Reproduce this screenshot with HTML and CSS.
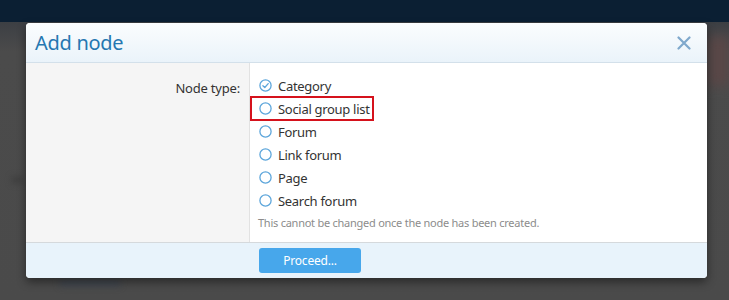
FILE: index.html
```html
<!DOCTYPE html>
<html>
<head>
<meta charset="utf-8">
<link rel="stylesheet" href="styles.css">
</head>
<body>
<div class="topbar"></div>
<div class="backdrop">
  <div class="bg-red"></div>
  <div class="bg-text bg-text-1"></div>
  <div class="bg-text bg-text-2"></div>
  <div class="dialog">
    <div class="dialog-head">
      <h1 class="dialog-title">Add node</h1>
      <span class="close">
        <svg width="14" height="14" viewBox="0 0 14 14"><path d="M1.5 1.5 L12.5 12.5 M12.5 1.5 L1.5 12.5" stroke="#7fa8cc" stroke-width="2.2" stroke-linecap="round" fill="none"/></svg>
      </span>
    </div>
    <div class="dialog-body">
      <div class="label-col">
        <span class="field-label">Node type:</span>
      </div>
      <div class="input-col">
        <ul class="radio-list">
          <li class="radio-row">
            <svg class="radio" width="13" height="13" viewBox="0 0 13 13"><circle cx="6.5" cy="6.5" r="5.6" fill="#fff" stroke="#5da6db" stroke-width="1.3"/><path d="M3.9 6.7 L5.8 8.5 L9.2 4.6" stroke="#5da6db" stroke-width="1.3" fill="none" stroke-linecap="round" stroke-linejoin="round"/></svg>
            <span>Category</span>
          </li>
          <li class="radio-row highlighted">
            <svg class="radio" width="13" height="13" viewBox="0 0 13 13"><circle cx="6.5" cy="6.5" r="5.6" fill="#fff" stroke="#5da6db" stroke-width="1.3"/></svg>
            <span>Social group list</span>
          </li>
          <li class="radio-row">
            <svg class="radio" width="13" height="13" viewBox="0 0 13 13"><circle cx="6.5" cy="6.5" r="5.6" fill="#fff" stroke="#5da6db" stroke-width="1.3"/></svg>
            <span>Forum</span>
          </li>
          <li class="radio-row">
            <svg class="radio" width="13" height="13" viewBox="0 0 13 13"><circle cx="6.5" cy="6.5" r="5.6" fill="#fff" stroke="#5da6db" stroke-width="1.3"/></svg>
            <span>Link forum</span>
          </li>
          <li class="radio-row">
            <svg class="radio" width="13" height="13" viewBox="0 0 13 13"><circle cx="6.5" cy="6.5" r="5.6" fill="#fff" stroke="#5da6db" stroke-width="1.3"/></svg>
            <span>Page</span>
          </li>
          <li class="radio-row">
            <svg class="radio" width="13" height="13" viewBox="0 0 13 13"><circle cx="6.5" cy="6.5" r="5.6" fill="#fff" stroke="#5da6db" stroke-width="1.3"/></svg>
            <span>Search forum</span>
          </li>
        </ul>
        <p class="hint">This cannot be changed once the node has been created.</p>
      </div>
    </div>
    <div class="dialog-foot">
      <div class="foot-spacer"></div>
      <div class="foot-actions">
        <button class="btn-primary">Proceed...</button>
      </div>
    </div>
  </div>
</div>
</body>
</html>
```

FILE: styles.css
```css
html, body {
  margin: 0;
  padding: 0;
}
body {
  width: 729px;
  height: 300px;
  overflow: hidden;
  background: #4a4a4a;
  font-family: "Noto Sans", "Open Sans", sans-serif;
  color: #333;
}
.topbar {
  height: 22px;
  background: #0b1f33;
}
.backdrop {
  position: relative;
  height: 278px;
  padding-top: 1px;
  box-sizing: border-box;
  background: linear-gradient(180deg, #3c3f44 0px, #4b4b4b 30px, #4a4a4a 100%);
}
.bg-red {
  position: absolute;
  right: 0;
  top: 14px;
  width: 22px;
  height: 50px;
  background: #594747;
  filter: blur(6px);
}
.bg-text {
  position: absolute;
  background: #3f4650;
  filter: blur(3px);
  height: 6px;
}
.bg-text-1 { left: 60px; top: 258px; width: 60px; }
.bg-text-2 { left: 12px; top: 155px; width: 10px; background: #3c3c3c; }
.dialog {
  position: relative;
  margin-left: 26px;
  width: 681px;
  border-radius: 4px;
  overflow: hidden;
  background: #fff;
  box-shadow: 0 4px 10px rgba(0,0,0,0.45);
}
.dialog-head {
  height: 40px;
  box-sizing: border-box;
  display: flex;
  align-items: center;
  justify-content: space-between;
  padding: 0 16px 0 9px;
  background: linear-gradient(180deg, #fbfdfe 0%, #eaf3fa 100%);
  border-bottom: 1px solid #d3e0ea;
}
.dialog-title {
  margin: 0;
  font-family: "Noto Sans", "Open Sans", sans-serif;
  font-weight: 400;
  font-size: 20px;
  letter-spacing: -0.3px;
  color: #2577b1;
  line-height: 1;
}
.close {
  display: flex;
  width: 14px;
  height: 14px;
}
.dialog-body {
  display: flex;
  height: 179px;
}
.label-col {
  width: 224px;
  box-sizing: border-box;
  background: #f5f5f5;
  border-right: 1px solid #e2e2e2;
  text-align: right;
  padding: 13px 9px 0 0;
}
.field-label {
  font-size: 13px;
  line-height: 19px;
  letter-spacing: -0.2px;
  color: #333;
}
.input-col {
  flex: 1;
  padding: 11px 0 0 8px;
}
.radio-list {
  list-style: none;
  margin: 0;
  padding: 0;
}
.radio-row {
  display: flex;
  align-items: center;
  gap: 6px;
  height: 23px;
  padding-left: 1px;
  font-size: 13px;
  letter-spacing: -0.3px;
  color: #333;
  box-sizing: border-box;
}
.radio-row.highlighted {
  width: 124px;
  height: 25px;
  margin: -1px 0 -1px -8px;
  padding-left: 7px;
  border: 2px solid #d5121c;
}
.radio {
  flex: none;
}
.hint {
  margin: 4px 0 0 0;
  font-size: 11px;
  line-height: 14px;
  letter-spacing: -0.25px;
  color: #8c8c8c;
}
.dialog-foot {
  display: flex;
  height: 36px;
  box-sizing: border-box;
  background: #e8f3fb;
  border-top: 1px solid #d5d9dc;
}
.foot-spacer {
  width: 224px;
}
.foot-actions {
  padding: 5px 0 0 9px;
}
.btn-primary {
  width: 102px;
  height: 25px;
  border: none;
  border-radius: 3px;
  background: #47a7eb;
  color: #fff;
  font-family: "Noto Sans", "Open Sans", sans-serif;
  font-size: 12px;
  letter-spacing: -0.2px;
  padding: 0;
}
```
